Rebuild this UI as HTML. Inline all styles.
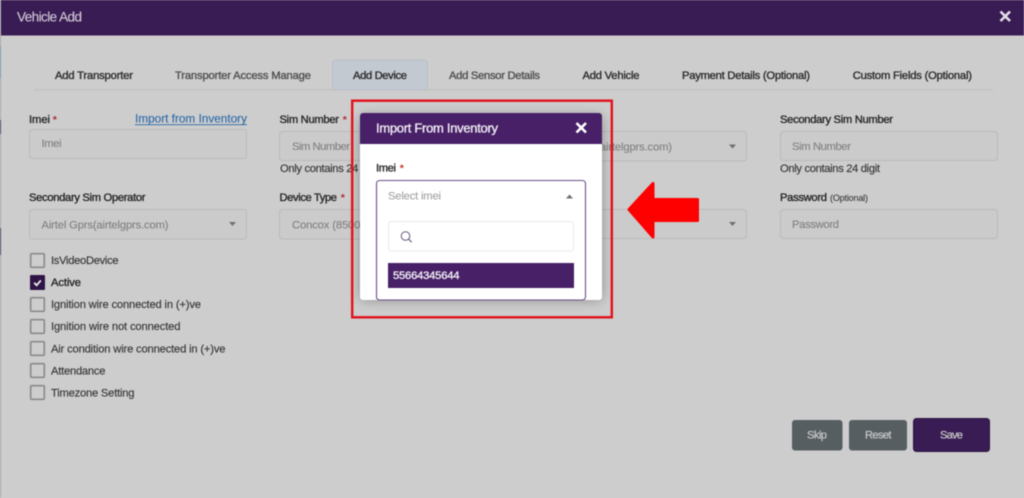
<!DOCTYPE html>
<html>
<head>
<meta charset="utf-8">
<title>Vehicle Add</title>
<style>
html,body{margin:0;padding:0;width:1024px;height:498px;overflow:hidden;background:#cdcdcd}
svg{display:block;filter:blur(.45px)}
text{font-family:"Liberation Sans",sans-serif;font-size:11.2px;fill:#2c2c2c}
.m{stroke:#262626;stroke-width:.35px;fill:#262626}
.tab{fill:#2b2b2b;stroke:#2b2b2b;stroke-width:.35px}
.tabg{fill:#505050;stroke:#505050;stroke-width:.35px}
.star{fill:#b02a30;stroke:none;font-weight:bold;font-size:10.5px}
.ph{fill:#7f7f7f;stroke:#7f7f7f;stroke-width:.1px}
.cb{fill:none;stroke:#8a8a8a;stroke-width:1.6}
.cl{fill:#363636;stroke:#363636;stroke-width:.14px}
.box{fill:#cbcbcb;stroke:#bababa;stroke-width:1}
.btn{fill:#c6c6c6;stroke:#c6c6c6;stroke-width:.25px}
</style>
</head>
<body>
<svg width="1024" height="498" viewBox="0 0 1024 498" xmlns="http://www.w3.org/2000/svg">
<defs>
<filter id="sh" x="-20%" y="-20%" width="140%" height="140%"><feGaussianBlur stdDeviation="6"/></filter>
</defs>
<rect width="1024" height="498" fill="#cdcdcd"/>
<!-- left edge -->
<rect x="0" y="0" width="1" height="498" fill="#a8a8a8"/>
<rect x="0" y="46" width="1" height="32" fill="#6f97ad"/>
<rect x="0" y="120" width="1" height="14" fill="#4d3d63"/>
<rect x="0" y="228" width="1" height="27" fill="#4d3d63"/>
<!-- header -->
<rect x="1" y="0" width="1023" height="35.500" fill="#3a1c54"/>
<text x="17" y="21.500" style="font-size:13.500px;fill:#d2cbd8;stroke:#d2cbd8;stroke-width:.12px" textLength="65" lengthAdjust="spacing">Vehicle Add</text>
<path d="M1000.500 11.500L1010 21M1010 11.500L1000.500 21" stroke="#e4e0e8" stroke-width="2.600" fill="none"/>
<!-- tabs -->
<line x1="34" y1="89.700" x2="993" y2="89.700" stroke="#c0c0c0" stroke-width="1.200"/>
<path d="M332.500 90V63a3 3 0 0 1 3-3h89a3 3 0 0 1 3 3v27z" fill="#c3c9d0" stroke="#b9bfc6"/>
<text class="tab" x="55" y="79" textLength="78" lengthAdjust="spacing">Add Transporter</text>
<text class="tabg" x="175" y="79" textLength="136" lengthAdjust="spacing">Transporter Access Manage</text>
<text class="tab" x="353" y="79" textLength="54" lengthAdjust="spacing">Add Device</text>
<text class="tabg" x="449" y="79" textLength="91" lengthAdjust="spacing">Add Sensor Details</text>
<text class="tab" x="582.500" y="79" textLength="57" lengthAdjust="spacing">Add Vehicle</text>
<text class="tab" x="682" y="79" textLength="128" lengthAdjust="spacing">Payment Details (Optional)</text>
<text class="tab" x="852.700" y="79" textLength="119.300" lengthAdjust="spacing">Custom Fields (Optional)</text>
<!-- row 1 -->
<text class="m" x="29" y="123" textLength="21" lengthAdjust="spacing">Imei</text>
<text class="star" x="52.700" y="123">*</text>
<text x="135" y="122.500" style="font-size:11.800px;fill:#2c69a8;stroke:#2c69a8;stroke-width:.12px" textLength="112" lengthAdjust="spacing">Import from Inventory</text>
<line x1="135" y1="124.700" x2="247" y2="124.700" stroke="#2c69a8" stroke-width=".9"/>
<rect class="box" x="29.500" y="129.500" width="217" height="29" rx="3"/>
<text class="ph" x="41.500" y="147" textLength="20" lengthAdjust="spacing">Imei</text>

<text class="m" x="279.500" y="123" textLength="59.500" lengthAdjust="spacing">Sim Number</text>
<text class="star" x="342.700" y="123">*</text>
<rect class="box" x="279.500" y="131.500" width="217" height="29" rx="3"/>
<text class="ph" x="292" y="150" textLength="58" lengthAdjust="spacing">Sim Number</text>
<text class="cl" x="280" y="172" textLength="100" lengthAdjust="spacing">Only contains 24 digit</text>

<rect class="box" x="530.500" y="131.500" width="216" height="29.500" rx="3"/>
<text class="ph" x="545" y="150.500" textLength="127" lengthAdjust="spacing">Airtel Gprs(airtelgprs.com)</text>
<path d="M729 144.500h7l-3.500 4z" fill="#707070"/>

<text class="m" x="780" y="123" textLength="113" lengthAdjust="spacing">Secondary Sim Number</text>
<rect class="box" x="780.500" y="131.500" width="217" height="29" rx="3"/>
<text class="ph" x="792" y="150" textLength="59" lengthAdjust="spacing">Sim Number</text>
<text class="cl" x="780" y="172" textLength="100" lengthAdjust="spacing">Only contains 24 digit</text>
<!-- row 2 -->
<text class="m" x="29" y="201" textLength="116.500" lengthAdjust="spacing">Secondary Sim Operator</text>
<rect class="box" x="29.500" y="209.500" width="217" height="29.500" rx="3"/>
<text class="ph" x="41.500" y="228.500" textLength="127" lengthAdjust="spacing">Airtel Gprs(airtelgprs.com)</text>
<path d="M229 222h7l-3.500 4z" fill="#707070"/>

<text class="m" x="279.500" y="201" textLength="57.500" lengthAdjust="spacing">Device Type</text>
<text class="star" x="340.700" y="201">*</text>
<rect class="box" x="279.500" y="209.500" width="217" height="29.500" rx="3"/>
<text class="ph" x="292" y="228.500" textLength="72" lengthAdjust="spacing">Concox (8500)</text>

<rect class="box" x="530.500" y="209.500" width="216" height="29" rx="3"/>
<path d="M729 222h7l-3.500 4z" fill="#707070"/>

<text class="m" x="780" y="201" textLength="47" lengthAdjust="spacing">Password</text>
<text x="830" y="201" style="font-size:9px;fill:#3d3d3d;stroke:#3d3d3d;stroke-width:.12px" textLength="38" lengthAdjust="spacing">(Optional)</text>
<rect class="box" x="780.500" y="209.500" width="217" height="29" rx="3"/>
<text class="ph" x="792" y="228" textLength="47" lengthAdjust="spacing">Password</text>
<!-- checkboxes -->
<rect class="cb" x="30.700" y="253.700" width="13.600" height="13.600" rx="1"/>
<text class="cl" x="51" y="264" textLength="67.600" lengthAdjust="spacing">IsVideoDevice</text>
<rect x="30" y="275" width="15" height="15" rx="1" fill="#2f1547"/>
<path d="M34.200 282.800l2.400 2.500 4.200-4.900" stroke="#eee" stroke-width="1.800" fill="none"/>
<text class="m" x="51" y="286" textLength="30" lengthAdjust="spacing">Active</text>
<rect class="cb" x="30.700" y="297.700" width="13.600" height="13.600" rx="1"/>
<text class="cl" x="51" y="308" textLength="150" lengthAdjust="spacing">Ignition wire connected in (+)ve</text>
<rect class="cb" x="30.700" y="319.700" width="13.600" height="13.600" rx="1"/>
<text class="cl" x="51" y="330" textLength="129.500" lengthAdjust="spacing">Ignition wire not connected</text>
<rect class="cb" x="30.700" y="341.700" width="13.600" height="13.600" rx="1"/>
<text class="cl" x="51" y="352.500" textLength="174.500" lengthAdjust="spacing">Air condition wire connected in (+)ve</text>
<rect class="cb" x="30.700" y="363.700" width="13.600" height="13.600" rx="1"/>
<text class="cl" x="51" y="374.500" textLength="54.500" lengthAdjust="spacing">Attendance</text>
<rect class="cb" x="30.700" y="385.700" width="13.600" height="13.600" rx="1"/>
<text class="cl" x="51" y="396.500" textLength="83.500" lengthAdjust="spacing">Timezone Setting</text>
<!-- buttons -->
<rect x="792" y="420" width="50.500" height="30.500" rx="3" fill="#565e62"/>
<text class="btn" x="807" y="438.500" textLength="20" lengthAdjust="spacing">Skip</text>
<rect x="849" y="420" width="58" height="30.500" rx="3" fill="#565e62"/>
<text class="btn" x="865" y="438.500" textLength="26.500" lengthAdjust="spacing">Reset</text>
<rect x="913.500" y="418.500" width="76" height="33" rx="3" fill="#3a1c54" stroke="#2c1242"/>
<text class="btn" x="940" y="438.500" textLength="23" lengthAdjust="spacing">Save</text>
<!-- modal -->
<rect x="360" y="116" width="242" height="184" rx="3" fill="#000" opacity=".3" filter="url(#sh)"/>
<rect x="360" y="113" width="242" height="187" rx="3" fill="#fff"/>
<path d="M360 144v-28a3 3 0 0 1 3-3h236a3 3 0 0 1 3 3v28z" fill="#482068"/>
<text x="376" y="132.700" style="font-size:13px;fill:#f0ecf3;stroke:#f0ecf3;stroke-width:.35px" textLength="122" lengthAdjust="spacing">Import From Inventory</text>
<path d="M576.500 123l9.500 9.500M586 123l-9.500 9.500" stroke="#fff" stroke-width="2.600" fill="none"/>
<text class="m" x="376" y="171.700" textLength="20" lengthAdjust="spacing">Imei</text>
<text class="star" x="399.700" y="171.700" style="fill:#c9302c">*</text>
<rect x="376.500" y="180.500" width="209" height="119.500" rx="3" fill="#fff" stroke="#6d4f88" stroke-width="1.100"/>
<text x="388" y="199.300" style="fill:#a0a0a0;stroke:#a0a0a0;stroke-width:.1px" textLength="53" lengthAdjust="spacing">Select imei</text>
<path d="M566 198.500h7l-3.500-4z" fill="#707070"/>
<rect x="388.500" y="221.500" width="185" height="29.500" rx="3" fill="#fff" stroke="#eaeaea"/>
<circle cx="405.500" cy="236" r="4.300" fill="none" stroke="#6d5a80" stroke-width="1"/>
<path d="M408.700 239.200l3 3" stroke="#6d5a80" stroke-width="1.100"/>
<rect x="388" y="263" width="186" height="25" fill="#482068"/>
<text x="393" y="279" style="fill:#f4f1f6;stroke:#f4f1f6;stroke-width:.35px" textLength="66.500" lengthAdjust="spacing">55664345644</text>
<!-- red annotations -->
<rect x="352.200" y="100.700" width="259.600" height="216.600" fill="none" stroke="#e3101a" stroke-width="2.400"/>
<path d="M629 209.500L653 183.500V199.500H697.500V220.500H653V237z" fill="#fe0000" stroke="#fe0000" stroke-width="3" stroke-linejoin="round"/>
</svg>
</body>
</html>
